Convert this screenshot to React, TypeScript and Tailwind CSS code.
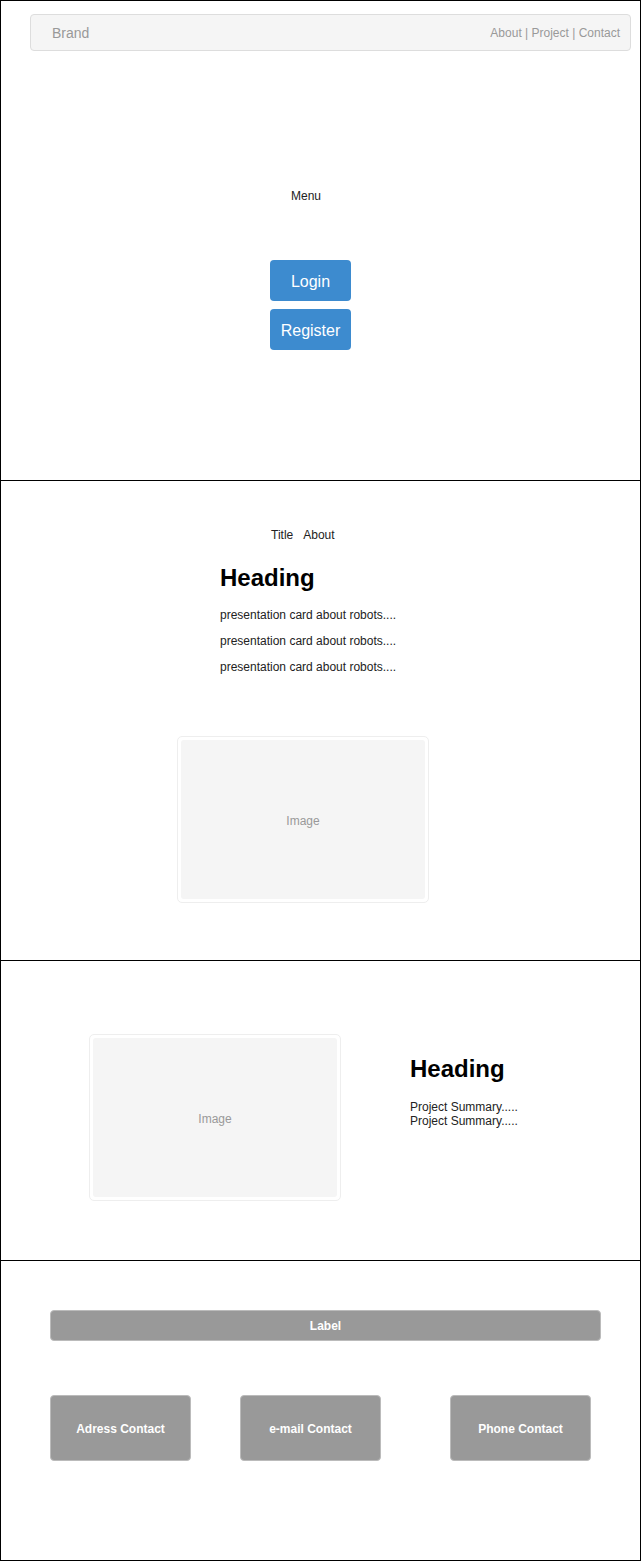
import React from "react";

function ImageBox() {
  return (
    <div className="w-[252px] h-[167px] border border-[#eeeeee] rounded-[5px] p-[3px] bg-white">
      <div className="w-full h-full bg-[#f5f5f5] rounded-[3px] flex items-center justify-center text-[12px] text-[#999999] pt-[2px]">
        Image
      </div>
    </div>
  );
}

export default function App() {
  return (
    <div
      className="w-[641px] bg-white text-black"
      style={{ fontFamily: '"Liberation Sans", Arial, sans-serif' }}
    >
      {/* Section 1 */}
      <section className="h-[480px] border-t border-x border-black flex flex-col">
        <div className="mt-[13px] ml-[29px] w-[601px] h-[37px] bg-[#f5f5f5] border border-[#dddddd] rounded-[4px] flex items-center justify-between pl-[21px] pr-[10px]">
          <span className="text-[14px] leading-[16px] mt-[1px] text-[#999999]">Brand</span>
          <span className="text-[12px] text-[#999999]">About | Project | Contact</span>
        </div>
        <div className="mt-[138px] ml-[290px] text-[12px] leading-[14px] text-[#222]">Menu</div>
        <div className="mt-[57px] ml-[269px] flex flex-col gap-[8px]">
          <button className="w-[81px] h-[41px] bg-[#3d8bcf] rounded-[4px] text-white text-[16px] pt-[2px]">Login</button>
          <button className="w-[81px] h-[41px] bg-[#3d8bcf] rounded-[4px] text-white text-[16px] pt-[2px]">Register</button>
        </div>
      </section>

      {/* Section 2 */}
      <section className="h-[480px] border-t border-x border-black flex flex-col">
        <div className="mt-[47px] ml-[270px] text-[12px] leading-[14px] text-[#222]">
          Title&nbsp;&nbsp;&nbsp;About
        </div>
        <div className="ml-[219px] mt-[22px] text-[24px] leading-[28px] font-bold">Heading</div>
        <div className="ml-[219px] mt-[16px] flex flex-col gap-[12px] text-[12px] leading-[14px] text-[#222]">
          <span>presentation card about robots....</span>
          <span>presentation card about robots....</span>
          <span>presentation card about robots....</span>
        </div>
        <div className="ml-[176px] mt-[62px]">
          <ImageBox />
        </div>
      </section>

      {/* Section 3 */}
      <section className="h-[300px] border-t border-x border-black flex">
        <div className="ml-[88px] mt-[73px]">
          <ImageBox />
        </div>
        <div className="ml-[69px] mt-[94px] flex flex-col">
          <div className="text-[24px] leading-[28px] font-bold">Heading</div>
          <div className="mt-[17px] text-[12px] leading-[14px] text-[#222]">
            <div>Project Summary.....</div>
            <div>Project Summary.....</div>
          </div>
        </div>
      </section>

      {/* Section 4 */}
      <section className="h-[301px] border border-black flex flex-col">
        <div className="mt-[49px] ml-[49px] w-[551px] h-[31px] bg-[#999999] border border-[#bbbbbb] rounded-[4px] flex items-center justify-center text-white text-[12px] font-bold">
          Label
        </div>
        <div className="mt-[54px] ml-[49px] flex">
          <div className="w-[141px] h-[66px] bg-[#999999] border border-[#bbbbbb] rounded-[4px] flex items-center justify-center text-white text-[12px] font-bold pt-[1px]">
            Adress Contact
          </div>
          <div className="ml-[49px] w-[141px] h-[66px] bg-[#999999] border border-[#bbbbbb] rounded-[4px] flex items-center justify-center text-white text-[12px] font-bold pt-[1px]">
            e-mail Contact
          </div>
          <div className="ml-[69px] w-[141px] h-[66px] bg-[#999999] border border-[#bbbbbb] rounded-[4px] flex items-center justify-center text-white text-[12px] font-bold pt-[1px]">
            Phone Contact
          </div>
        </div>
      </section>
    </div>
  );
}
